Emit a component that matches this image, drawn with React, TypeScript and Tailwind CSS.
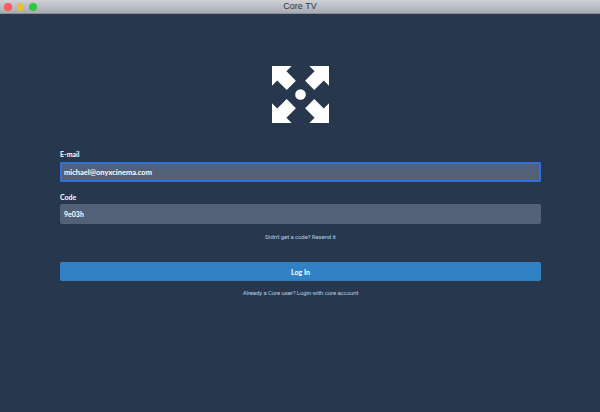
const font = { fontFamily: 'Lato, "Noto Sans", sans-serif' };

function Logo() {
  const arrow = "M0 0H20L14.7 5.3L24.3 15L15 24.3L5.3 14.7L0 20Z";
  return (
    <svg width="57" height="57" viewBox="0 0 58 58" fill="#fff">
      <path d={arrow} />
      <path d={arrow} transform="translate(58 0) scale(-1 1)" />
      <path d={arrow} transform="translate(0 58) scale(1 -1)" />
      <path d={arrow} transform="translate(58 58) scale(-1 -1)" />
      <circle cx="29" cy="29" r="5.4" />
    </svg>
  );
}

export default function App() {
  return (
    <div className="flex h-[412px] w-[600px] flex-col overflow-hidden bg-[#27374e]" style={font}>
      <div className="relative flex h-[14px] shrink-0 items-center justify-center border-b border-[#8a8f96] bg-gradient-to-b from-[#cfd1d5] to-[#a7abb2]">
        <div className="absolute left-[4px] top-[3px] flex gap-[5px]">
          <span className="h-[7.5px] w-[7.5px] rounded-full bg-[#fc5b57]" />
          <span className="h-[7.5px] w-[7.5px] rounded-full bg-[#e5bf3c]" />
          <span className="h-[7.5px] w-[7.5px] rounded-full bg-[#2cc840]" />
        </div>
        <span className="font-['Liberation_Sans'] text-[9px] leading-none text-[#33363b]">Core TV</span>
      </div>

      <div className="flex flex-col pl-[60px] pr-[59px] pt-[52px]">
        <div className="flex justify-center">
          <Logo />
        </div>

        <label className="mt-[26px] h-[13px] text-[7px] font-bold leading-[10px] text-white">E-mail</label>
        <div className="flex h-[20px] items-center rounded-[1px] border-2 border-[#2f6fd8] bg-[#536178] px-[2px] pt-[1px] text-[7.5px] font-bold text-white">
          michael@onyxcinema.com
        </div>

        <label className="mt-[10px] h-[12px] text-[7px] font-bold leading-[10px] text-white">Code</label>
        <div className="flex h-[20px] items-center rounded-[2px] bg-[#536178] px-[4px] text-[7px] font-bold text-white">
          9e03h
        </div>

        <p className="mt-[8px] text-center font-['Roboto'] text-[6px] leading-[10px] tracking-[-0.1px] text-[#b4cde4]">
          Didn't get a code? Resend it
        </p>

        <button className="mt-[20px] h-[19px] rounded-[2px] bg-[#3182c4] pt-[1px] text-[7px] font-bold text-white">Log In</button>

        <p className="mt-[7px] text-center font-['Roboto'] text-[6px] leading-[10px] tracking-[-0.1px] text-[#b4cde4]">
          Already a Core user? Login with core account
        </p>
      </div>
    </div>
  );
}
